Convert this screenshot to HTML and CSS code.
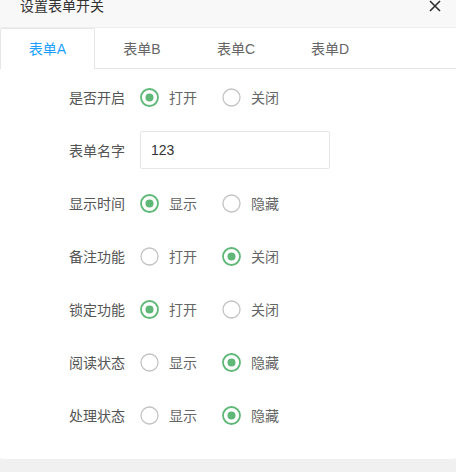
FILE: index.html
```html
<!DOCTYPE html>
<html lang="zh-CN">
<head>
<meta charset="utf-8">
<title>设置表单开关</title>
<link rel="stylesheet" href="styles.css">
</head>
<body>
<div class="dialog">
  <div class="title-bar">
    <span class="title">设置表单开关</span>
    <svg class="close" width="12" height="12" viewBox="0 0 12 12"><path d="M1 1 L11 11 M11 1 L1 11" stroke="#2f2f2f" stroke-width="1.6" fill="none"/></svg>
  </div>
  <ul class="tabs">
    <li class="tab active">表单A</li>
    <li class="tab">表单B</li>
    <li class="tab">表单C</li>
    <li class="tab">表单D</li>
  </ul>
  <form class="form">
    <div class="row">
      <label class="label">是否开启</label>
      <div class="field">
        <span class="radio on"><svg viewBox="0 0 19 19"><circle cx="9.5" cy="9.5" r="8.5"/><circle class="dot" cx="9.5" cy="9.5" r="4"/></svg><span>打开</span></span>
        <span class="radio"><svg viewBox="0 0 19 19"><circle cx="9.5" cy="9.5" r="8.5"/></svg><span>关闭</span></span>
      </div>
    </div>
    <div class="row">
      <label class="label">表单名字</label>
      <div class="field"><input class="input" type="text" value="123"></div>
    </div>
    <div class="row">
      <label class="label">显示时间</label>
      <div class="field">
        <span class="radio on"><svg viewBox="0 0 19 19"><circle cx="9.5" cy="9.5" r="8.5"/><circle class="dot" cx="9.5" cy="9.5" r="4"/></svg><span>显示</span></span>
        <span class="radio"><svg viewBox="0 0 19 19"><circle cx="9.5" cy="9.5" r="8.5"/></svg><span>隐藏</span></span>
      </div>
    </div>
    <div class="row">
      <label class="label">备注功能</label>
      <div class="field">
        <span class="radio"><svg viewBox="0 0 19 19"><circle cx="9.5" cy="9.5" r="8.5"/></svg><span>打开</span></span>
        <span class="radio on"><svg viewBox="0 0 19 19"><circle cx="9.5" cy="9.5" r="8.5"/><circle class="dot" cx="9.5" cy="9.5" r="4"/></svg><span>关闭</span></span>
      </div>
    </div>
    <div class="row">
      <label class="label">锁定功能</label>
      <div class="field">
        <span class="radio on"><svg viewBox="0 0 19 19"><circle cx="9.5" cy="9.5" r="8.5"/><circle class="dot" cx="9.5" cy="9.5" r="4"/></svg><span>打开</span></span>
        <span class="radio"><svg viewBox="0 0 19 19"><circle cx="9.5" cy="9.5" r="8.5"/></svg><span>关闭</span></span>
      </div>
    </div>
    <div class="row">
      <label class="label">阅读状态</label>
      <div class="field">
        <span class="radio"><svg viewBox="0 0 19 19"><circle cx="9.5" cy="9.5" r="8.5"/></svg><span>显示</span></span>
        <span class="radio on"><svg viewBox="0 0 19 19"><circle cx="9.5" cy="9.5" r="8.5"/><circle class="dot" cx="9.5" cy="9.5" r="4"/></svg><span>隐藏</span></span>
      </div>
    </div>
    <div class="row">
      <label class="label">处理状态</label>
      <div class="field">
        <span class="radio"><svg viewBox="0 0 19 19"><circle cx="9.5" cy="9.5" r="8.5"/></svg><span>显示</span></span>
        <span class="radio on"><svg viewBox="0 0 19 19"><circle cx="9.5" cy="9.5" r="8.5"/><circle class="dot" cx="9.5" cy="9.5" r="4"/></svg><span>隐藏</span></span>
      </div>
    </div>
  </form>
</div>
</body>
</html>
```
FILE: styles.css
```css
html, body {
  margin: 0;
  padding: 0;
  background: #f0f0f0;
  font-family: "Liberation Sans", "Noto Sans CJK SC", sans-serif;
  font-size: 14px;
  overflow: hidden;
}
.dialog {
  background: #fff;
  height: 459px;
  border-radius: 0 0 2px 2px;
  overflow: hidden;
}
.title-bar {
  margin-top: -15px;
  height: 42px;
  line-height: 42px;
  background: #f8f8f8;
  border-bottom: 1px solid #eee;
  display: flex;
  align-items: center;
  justify-content: space-between;
  padding: 0 15px 0 20px;
  color: #333;
}
.title { font-size: 14px; }
.close { display: block; }
.tabs {
  list-style: none;
  margin: 0;
  padding: 0;
  display: flex;
  height: 40px;
  border-bottom: 1px solid #e6e6e6;
}
.tab {
  width: 94px;
  height: 40px;
  line-height: 40px;
  text-align: center;
  color: #666;
  box-sizing: border-box;
  border: 1px solid transparent;
  border-bottom: none;
}
.tab.active {
  color: #1e9fff;
  background: #fff;
  border-color: #e6e6e6;
  border-radius: 2px 2px 0 0;
  height: 41px;
  margin-top: 0;
  width: 95px;
}
.form {
  display: flex;
  flex-direction: column;
  gap: 15px;
  padding: 9px 0 0 30px;
}
.row {
  display: flex;
  align-items: center;
  height: 38px;
}
.label {
  width: 80px;
  padding: 0 15px;
  text-align: right;
  color: #555;
}
.field {
  display: flex;
  align-items: center;
}
.radio {
  display: flex;
  align-items: center;
  width: 82px;
  color: #666;
}
.radio svg {
  width: 19px;
  height: 19px;
  margin-right: 10px;
  display: block;
}
.radio svg circle {
  fill: #fff;
  stroke: #c2c2c2;
  stroke-width: 1.3;
}
.radio.on svg circle {
  stroke: #5fb878;
  stroke-width: 1.8;
}
.radio.on svg .dot {
  fill: #5fb878;
  stroke: none;
}
.input {
  width: 190px;
  height: 38px;
  box-sizing: border-box;
  border: 1px solid #e6e6e6;
  border-radius: 2px;
  padding: 0 10px;
  font-family: "Liberation Sans", "Noto Sans CJK SC", sans-serif;
  font-size: 14px;
  color: #333;
  outline: none;
}
```
